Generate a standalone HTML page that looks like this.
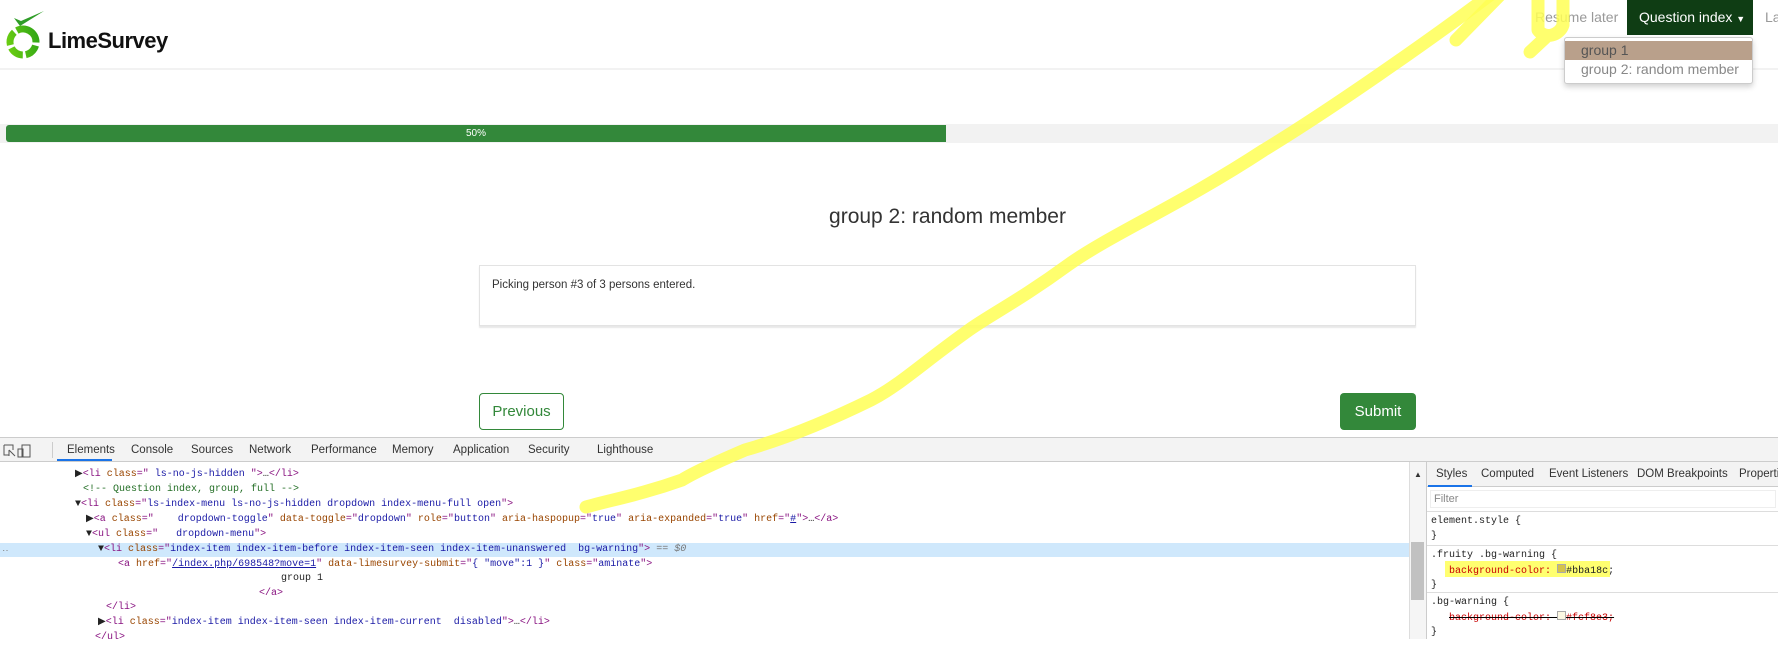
<!DOCTYPE html>
<html><head><meta charset="utf-8"><style>
*{margin:0;padding:0;box-sizing:border-box}
body{width:1778px;height:639px;overflow:hidden;position:relative;background:#fff;font-family:"Liberation Sans",sans-serif}
.abs{position:absolute}
.code{font-family:"Liberation Mono",monospace;font-size:10px;white-space:pre;color:#222;height:15px;line-height:15px;position:absolute}
.t{color:#881280}.an{color:#994500}.av{color:#1a1aa6}.cm{color:#236e25}
.tab{position:absolute;top:444px;font-size:11.5px;color:#333}
.st{position:absolute;font-size:11.5px;color:#333}
.sc{position:absolute;font-family:"Liberation Mono",monospace;font-size:10px;color:#222;white-space:pre}
</style></head><body>
<svg class="abs" style="left:0;top:0" width="60" height="65" viewBox="0 0 60 65">
<defs><linearGradient id="g" x1="0" y1="0" x2="1" y2="1"><stop offset="0" stop-color="#6fd012"/><stop offset="1" stop-color="#2ea416"/></linearGradient></defs>
<circle cx="23" cy="42" r="13" fill="none" stroke="url(#g)" stroke-width="7" stroke-dasharray="14 3" transform="rotate(-60 23 42)"/>
<path d="M14 18 L20 26 L44 11 L21 21 Z" fill="#2f9d27"/>
</svg>
<div class="abs" style="left:48px;top:28px;font-size:22px;font-weight:bold;color:#111;letter-spacing:-0.5px">LimeSurvey</div>
<div class="abs" style="left:0;top:68px;width:1778px;height:2px;background:#f2f2f2"></div>
<div class="abs" style="left:1535px;top:9px;font-size:14px;color:#999">Resume later</div>
<div class="abs" style="left:1627px;top:0;width:126px;height:35px;background:#0f3d14;color:#fff;font-size:14px;padding:9px 0 0 12px">Question index <span style="font-size:9px">▼</span></div>
<div class="abs" style="left:1765px;top:9px;font-size:14px;color:#999">La</div>
<div class="abs" style="left:1564px;top:37px;width:189px;height:47px;background:#fff;border:1px solid #ccc;border-radius:3px;box-shadow:0 3px 6px rgba(0,0,0,.18)">
<div style="margin-top:3px;height:19px;background:#b9a08b;color:#555;font-size:14px;padding:1px 0 0 16px">group 1</div>
<div style="height:19px;color:#888;font-size:14px;padding:1px 0 0 16px">group 2: random member</div></div>
<div class="abs" style="left:0;top:124px;width:1778px;height:19px;background:#f2f2f2"></div>
<div class="abs" style="left:6px;top:125px;width:940px;height:17px;background:#33883a;border-radius:3px 0 0 3px;color:#fff;font-size:10px;text-align:center;line-height:17px">50%</div>
<div class="abs" style="left:479px;top:205px;width:937px;text-align:center;font-size:21px;color:#333">group 2: random member</div>
<div class="abs" style="left:479px;top:265px;width:937px;height:61px;border:1px solid #e3e3e3;box-shadow:0 2px 1px #e8e8e8;font-size:11.5px;color:#333;padding:13px 0 0 12px">Picking person #3 of 3 persons entered.</div>
<div class="abs" style="left:479px;top:393px;width:85px;height:37px;border:1px solid #33883a;border-radius:4px;color:#33883a;font-size:15px;text-align:center;line-height:35px">Previous</div>
<div class="abs" style="left:1340px;top:393px;width:76px;height:37px;background:#33883a;border-radius:4px;color:#fff;font-size:15px;text-align:center;line-height:37px">Submit</div>
<div class="abs" style="left:0;top:437px;width:1778px;height:202px;background:#fff;border-top:1px solid #ccc"></div>
<div class="abs" style="left:0;top:438px;width:1778px;height:24px;background:#f3f3f3;border-bottom:1px solid #ccc"></div>
<svg class="abs" style="left:2px;top:443px" width="40" height="16"><path d="M2 2h9v5M2 2v10h5M7 7l6 6M7 7v6" fill="none" stroke="#555"/><rect x="20" y="2" width="8" height="12" fill="none" stroke="#555"/><rect x="16" y="6" width="5" height="8" fill="none" stroke="#555"/></svg>
<div class="abs" style="left:52px;top:442px;width:1px;height:16px;background:#ccc"></div>
<div class="tab" style="left:67px">Elements</div><div class="abs" style="left:57px;top:459px;width:55px;height:2px;background:#1a73e8"></div>
<div class="tab" style="left:131px">Console</div><div class="tab" style="left:191px">Sources</div><div class="tab" style="left:249px">Network</div><div class="tab" style="left:311px">Performance</div><div class="tab" style="left:392px">Memory</div><div class="tab" style="left:453px">Application</div><div class="tab" style="left:528px">Security</div><div class="tab" style="left:597px">Lighthouse</div>
<div class="abs" style="left:0;top:543px;width:1410px;height:14px;background:#cfe8fc"></div>
<div class="code" style="left:75px;top:467px">▶<span class="t">&lt;li</span> <span class="an">class</span><span class="t">="</span><span class="av"> ls-no-js-hidden </span><span class="t">"&gt;</span>…<span class="t">&lt;/li&gt;</span></div>
<div class="code cm" style="left:83px;top:482px">&lt;!-- Question index, group, full --&gt;</div>
<div class="code" style="left:75px;top:497px">▼<span class="t">&lt;li</span> <span class="an">class</span><span class="t">="</span><span class="av">ls-index-menu ls-no-js-hidden dropdown index-menu-full open</span><span class="t">"&gt;</span></div>
<div class="code" style="left:86px;top:512px">▶<span class="t">&lt;a</span> <span class="an">class</span><span class="t">="</span><span class="av">    dropdown-toggle</span><span class="t">"</span> <span class="an">data-toggle</span><span class="t">="</span><span class="av">dropdown</span><span class="t">"</span> <span class="an">role</span><span class="t">="</span><span class="av">button</span><span class="t">"</span> <span class="an">aria-haspopup</span><span class="t">="</span><span class="av">true</span><span class="t">"</span> <span class="an">aria-expanded</span><span class="t">="</span><span class="av">true</span><span class="t">"</span> <span class="an">href</span><span class="t">="</span><span class="av" style="text-decoration:underline">#</span><span class="t">"&gt;</span>…<span class="t">&lt;/a&gt;</span></div>
<div class="code" style="left:86px;top:527px">▼<span class="t">&lt;ul</span> <span class="an">class</span><span class="t">="</span><span class="av">   dropdown-menu</span><span class="t">"&gt;</span></div>
<div class="code" style="left:2px;top:542px;color:#888">‥</div>
<div class="code" style="left:98px;top:542px">▼<span class="t">&lt;li</span> <span class="an">class</span><span class="t">="</span><span class="av">index-item index-item-before index-item-seen index-item-unanswered  bg-warning</span><span class="t">"&gt;</span> <span style="color:#777">== <i>$0</i></span></div>
<div class="code" style="left:118px;top:557px"><span class="t">&lt;a</span> <span class="an">href</span><span class="t">="</span><span class="av" style="text-decoration:underline">/index.php/698548?move=1</span><span class="t">"</span> <span class="an">data-limesurvey-submit</span><span class="t">="</span><span class="av">{ "move":1 }</span><span class="t">"</span> <span class="an">class</span><span class="t">="</span><span class="av">aminate</span><span class="t">"&gt;</span></div>
<div class="code" style="left:281px;top:571px">group 1</div>
<div class="code t" style="left:259px;top:586px">&lt;/a&gt;</div>
<div class="code t" style="left:106px;top:600px">&lt;/li&gt;</div>
<div class="code" style="left:98px;top:615px">▶<span class="t">&lt;li</span> <span class="an">class</span><span class="t">="</span><span class="av">index-item index-item-seen index-item-current  disabled</span><span class="t">"&gt;</span>…<span class="t">&lt;/li&gt;</span></div>
<div class="code t" style="left:95px;top:630px">&lt;/ul&gt;</div>
<div class="abs" style="left:1409px;top:462px;width:18px;height:177px;background:#f5f5f5;border-left:1px solid #ddd;border-right:1px solid #ccc"></div>
<div class="abs" style="left:1414px;top:470px;font-size:8px;color:#333">▲</div>
<div class="abs" style="left:1411px;top:542px;width:13px;height:58px;background:#c1c1c1"></div>
<div class="abs" style="left:1427px;top:462px;width:351px;height:25px;background:#f3f3f3;border-bottom:1px solid #ccc"></div>
<div class="st" style="left:1436px;top:468px">Styles</div><div class="abs" style="left:1428px;top:485px;width:44px;height:2px;background:#1a73e8"></div>
<div class="st" style="left:1481px;top:468px">Computed</div><div class="st" style="left:1549px;top:468px">Event Listeners</div><div class="st" style="left:1637px;top:468px">DOM Breakpoints</div><div class="st" style="left:1739px;top:468px">Properti</div>
<div class="abs" style="left:1430px;top:490px;width:346px;height:18px;background:#fff;border:1px solid #eee;font-size:11px;color:#888;padding:2px 0 0 3px">Filter</div>
<div class="abs" style="left:1427px;top:511px;width:351px;height:1px;background:#ddd"></div>
<div class="sc" style="left:1431px;top:515px;line-height:14.5px">element.style {<br>}</div>
<div class="abs" style="left:1427px;top:545px;width:351px;height:1px;background:#ddd"></div>
<div class="abs" style="left:1445px;top:561px;width:165px;height:16px;background:#ffff70"></div>
<div class="sc" style="left:1431px;top:549px;line-height:14.5px">.fruity .bg-warning {<br>   <span style="color:#c80000">background-color:</span> <span style="display:inline-block;width:9px;height:9px;background:#d4c24a;border:1px solid #aaa"></span>#bba18c;<br>}</div>
<div class="abs" style="left:1427px;top:592px;width:351px;height:1px;background:#ddd"></div>
<div class="sc" style="left:1431px;top:596px;line-height:14.5px">.bg-warning {<br>   <span style="color:#c80000;text-decoration:line-through;text-decoration-color:#000">background-color: <span style="display:inline-block;width:9px;height:9px;background:#fcf8e3;border:1px solid #aaa"></span>#fcf8e3;</span><br>}</div>
<svg class="abs" style="left:0;top:0" width="1778" height="639">
<g fill="none" stroke="#ffff55" stroke-opacity="0.85" stroke-width="13" stroke-linecap="round" stroke-linejoin="round">
<path d="M1490 -5 C1430 40 1330 110 1264 150 C1180 205 1110 235 1068 265 C1020 300 990 315 969 330 C920 365 900 385 871 400 C820 425 780 440 745 450 C710 465 690 475 682 480 C640 495 610 500 586 507"/>
<path d="M1456 40 L1500 -5"/>
<path d="M1538 -5 L1538 30 C1545 40 1560 35 1563 25 L1563 -5 M1545 38 L1530 52"/>
</g></svg>
</body></html>
